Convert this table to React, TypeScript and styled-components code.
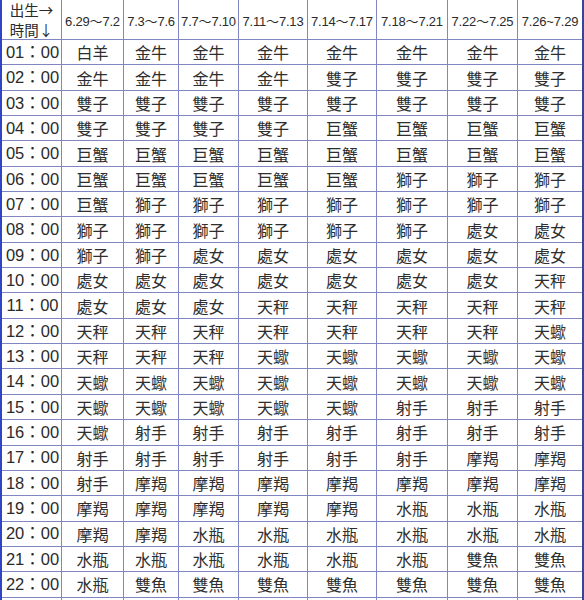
import React from 'react';
import styled, { createGlobalStyle } from 'styled-components';

const GlobalStyle = createGlobalStyle`
  html, body {
    margin: 0;
    padding: 0;
    background: #ffffff;
  }
  body {
    height: 600px;
    overflow: hidden;
  }
`;

const dates = [
  '6.29～7.2',
  '7.3～7.6',
  '7.7～7.10',
  '7.11～7.13',
  '7.14～7.17',
  '7.18～7.21',
  '7.22～7.25',
  '7.26~7.29',
];

const rows: [string, string[]][] = [
  ['01', ['白羊', '金牛', '金牛', '金牛', '金牛', '金牛', '金牛', '金牛']],
  ['02', ['金牛', '金牛', '金牛', '金牛', '雙子', '雙子', '雙子', '雙子']],
  ['03', ['雙子', '雙子', '雙子', '雙子', '雙子', '雙子', '雙子', '雙子']],
  ['04', ['雙子', '雙子', '雙子', '雙子', '巨蟹', '巨蟹', '巨蟹', '巨蟹']],
  ['05', ['巨蟹', '巨蟹', '巨蟹', '巨蟹', '巨蟹', '巨蟹', '巨蟹', '巨蟹']],
  ['06', ['巨蟹', '巨蟹', '巨蟹', '巨蟹', '巨蟹', '獅子', '獅子', '獅子']],
  ['07', ['巨蟹', '獅子', '獅子', '獅子', '獅子', '獅子', '獅子', '獅子']],
  ['08', ['獅子', '獅子', '獅子', '獅子', '獅子', '獅子', '處女', '處女']],
  ['09', ['獅子', '獅子', '處女', '處女', '處女', '處女', '處女', '處女']],
  ['10', ['處女', '處女', '處女', '處女', '處女', '處女', '處女', '天秤']],
  ['11', ['處女', '處女', '處女', '天秤', '天秤', '天秤', '天秤', '天秤']],
  ['12', ['天秤', '天秤', '天秤', '天秤', '天秤', '天秤', '天秤', '天蠍']],
  ['13', ['天秤', '天秤', '天秤', '天蠍', '天蠍', '天蠍', '天蠍', '天蠍']],
  ['14', ['天蠍', '天蠍', '天蠍', '天蠍', '天蠍', '天蠍', '天蠍', '天蠍']],
  ['15', ['天蠍', '天蠍', '天蠍', '天蠍', '天蠍', '射手', '射手', '射手']],
  ['16', ['天蠍', '射手', '射手', '射手', '射手', '射手', '射手', '射手']],
  ['17', ['射手', '射手', '射手', '射手', '射手', '射手', '摩羯', '摩羯']],
  ['18', ['射手', '摩羯', '摩羯', '摩羯', '摩羯', '摩羯', '摩羯', '摩羯']],
  ['19', ['摩羯', '摩羯', '摩羯', '摩羯', '摩羯', '水瓶', '水瓶', '水瓶']],
  ['20', ['摩羯', '摩羯', '水瓶', '水瓶', '水瓶', '水瓶', '水瓶', '水瓶']],
  ['21', ['水瓶', '水瓶', '水瓶', '水瓶', '水瓶', '水瓶', '雙魚', '雙魚']],
  ['22', ['水瓶', '雙魚', '雙魚', '雙魚', '雙魚', '雙魚', '雙魚', '雙魚']],
];

const Page = styled.div`
  width: 584px;
  height: 600px;
  overflow: hidden;
  background: #ffffff;
`;

const Table = styled.div`
  display: grid;
  width: 580px;
  grid-template-columns: 60px 62px 55px 60px 69px 69px 71px 70px 64px;
  grid-template-rows: 40px repeat(23, 25.35px);
  border-left: 2px solid #2f45c4;
  border-right: 2px solid #34469a;
  font-family: 'Liberation Sans', 'Noto Sans CJK TC', sans-serif;
  color: #2b2b2b;
`;

const Cell = styled.div<{ $last?: boolean }>`
  display: flex;
  align-items: center;
  justify-content: center;
  box-sizing: border-box;
  border-bottom: 1px solid #7f86c2;
  border-right: ${(p) => (p.$last ? 'none' : '1px solid #7f86c2')};
  font-size: 16px;
  line-height: 1;
  white-space: nowrap;
`;

const CornerCell = styled(Cell)`
  flex-direction: column;
  justify-content: flex-start;
  font-family: 'Noto Sans CJK TC', sans-serif;
  font-size: 14.5px;
  line-height: 20px;
`;

const DateCell = styled(Cell)`
  font-size: 13px;
  letter-spacing: -0.2px;
  padding-top: 3px;
`;

const TimeCell = styled(Cell)`
  font-size: 16.5px;
  padding-left: 2px;
`;

const SignCell = styled(Cell)`
  font-family: 'Noto Sans CJK TC', sans-serif;
  font-size: 16px;
  color: #2e2e2e;
`;

export default function App() {
  const blank = Array.from({ length: 9 });
  return (
    <Page>
      <GlobalStyle />
      <Table>
        <CornerCell>
          <span>出生→</span>
          <span>時間↓</span>
        </CornerCell>
        {dates.map((d, i) => (
          <DateCell key={d} $last={i === dates.length - 1}>
            {d}
          </DateCell>
        ))}
        {rows.map(([hour, signs]) => (
          <React.Fragment key={hour}>
            <TimeCell>{hour}：00</TimeCell>
            {signs.map((s, i) => (
              <SignCell key={i} $last={i === signs.length - 1}>
                {s}
              </SignCell>
            ))}
          </React.Fragment>
        ))}
        {blank.map((_, i) => (
          <Cell key={`b${i}`} $last={i === blank.length - 1} />
        ))}
      </Table>
    </Page>
  );
}
